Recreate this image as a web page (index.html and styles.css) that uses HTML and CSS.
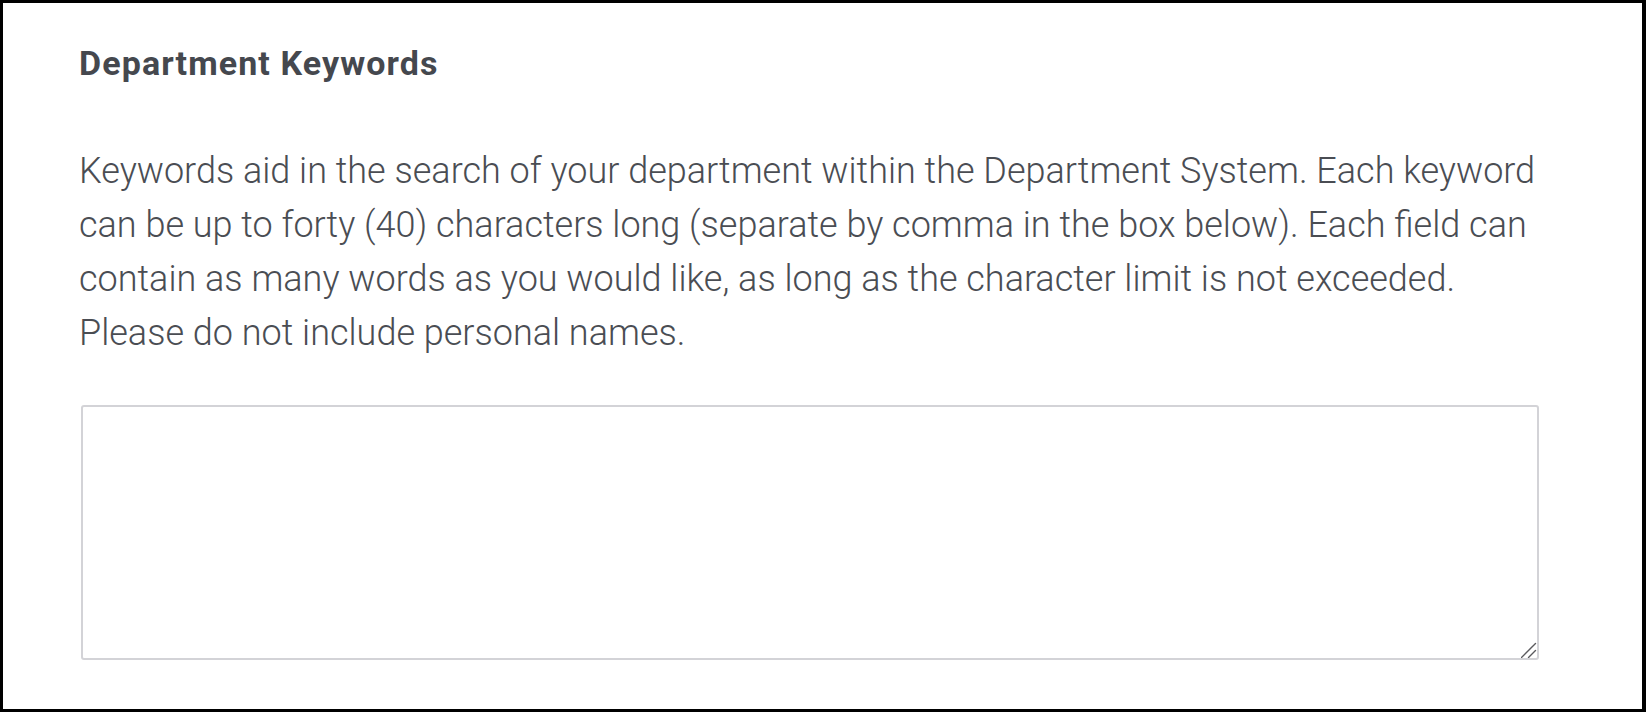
FILE: index.html
```html
<!DOCTYPE html>
<html lang="en">
<head>
<meta charset="utf-8">
<title>Department Keywords</title>
<link rel="stylesheet" href="styles.css">
</head>
<body>
<div class="frame">
  <section class="panel">
    <h2 class="panel-title">Department Keywords</h2>
    <p class="panel-text">Keywords aid in the search of your department within the Department System. Each keyword can be up to forty (40) characters long (separate by comma in the box below). Each field can contain as many words as you would like, as long as the character limit is not exceeded. Please do not include personal names.</p>
    <div class="input-wrap">
      <textarea class="keywords-input" aria-label="Department keywords"></textarea>
      <svg class="resize-grip" width="16" height="16" viewBox="0 0 16 16" aria-hidden="true">
        <path d="M0.5 15.5 L14.5 1.5 M7.5 15.5 L14.5 8.5" stroke="#5a5a5e" stroke-width="1.4" fill="none" stroke-linecap="round"/>
      </svg>
    </div>
  </section>
</div>
</body>
</html>
```

FILE: styles.css
```css
* { box-sizing: border-box; }
html, body { margin: 0; padding: 0; background: #ffffff; }
.frame {
  width: 1646px;
  height: 712px;
  border-style: solid;
  border-color: #000000;
  border-width: 3px 4px 3px 3px;
  background: #ffffff;
  overflow: hidden;
}
.panel {
  width: 1536px;
  padding: 40px 0 0 76px;
  font-family: Roboto, "Liberation Sans", sans-serif;
}
.panel-title {
  margin: 0;
  font-size: 34px;
  line-height: 40px;
  font-weight: 700;
  letter-spacing: 1.1px;
  color: #45484e;
}
.panel-text {
  margin: 61px 0 0 0;
  width: 1460px;
  font-size: 36px;
  line-height: 54px;
  font-weight: 300;
  color: #4a4d53;
}
.input-wrap {
  position: relative;
  margin: 45px 0 0 2px;
  width: 1458px;
  height: 255px;
}
.keywords-input {
  display: block;
  width: 100%;
  height: 100%;
  border: 2px solid #d3d3d7;
  border-radius: 3px;
  background: #ffffff;
  resize: none;
  font-family: inherit;
  font-size: 20px;
  outline: none;
}
.resize-grip {
  position: absolute;
  right: 2px;
  bottom: 2px;
  pointer-events: none;
}
```
